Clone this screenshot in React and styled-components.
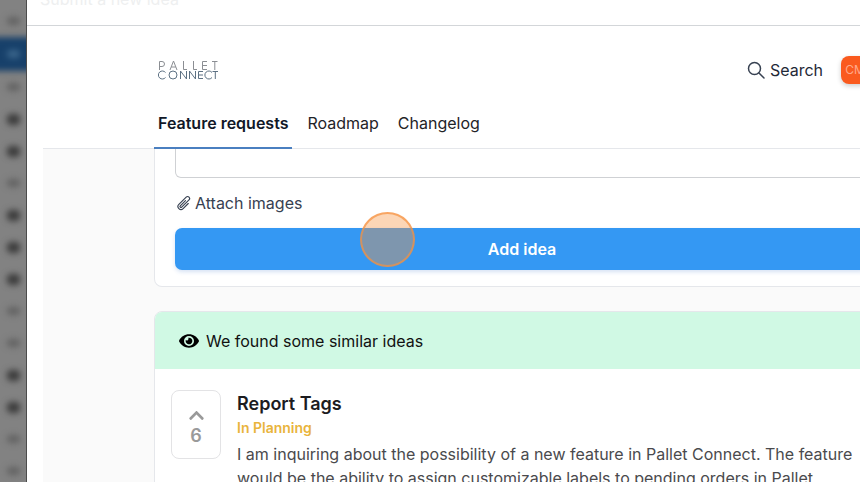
import React from "react";
import styled, { createGlobalStyle } from "styled-components";
import { FaEye, FaChevronUp } from "react-icons/fa";

const GlobalStyle = createGlobalStyle`
  * { box-sizing: border-box; }
  body {
    margin: 0;
    font-family: Inter, "Liberation Sans", sans-serif;
    font-size: 16px;
    line-height: 24px;
    color: #1f2937;
    background: #fff;
  }
  button, textarea, input { font: inherit; color: inherit; }
`;

const Screen = styled.div`
  display: flex;
  height: 100vh;
  overflow: hidden;
`;

const Rail = styled.nav`
  flex: 0 0 27px;
  display: flex;
  flex-direction: column;
  padding-top: 5px;
  overflow: hidden;
  background: #828282;
  border-right: 1px solid #4c4c4c;
`;

const RailItem = styled.div`
  flex: 0 0 ${(p) => (p.$active ? 34 : 32)}px;
  display: flex;
  align-items: center;
  margin: 0 -8px;
  padding-left: 15px;
  background: ${(p) => (p.$active ? "#17406a" : "transparent")};
  filter: blur(3px);
`;

const RailMark = styled.span`
  width: 13px;
  height: ${(p) => (p.$strong ? 11 : 8)}px;
  border-radius: 4px;
  background: ${(p) => (p.$active ? "#3b668c" : p.$strong ? "#3c3c3c" : "#626262")};
`;

const Dialog = styled.section`
  flex: 1;
  min-width: 0;
  display: flex;
  flex-direction: column;
  background: #fff;
`;

const DialogHeader = styled.header`
  flex: 0 0 26px;
  display: flex;
  align-items: flex-end;
  padding: 0 13px 14px;
  overflow: hidden;
  border-bottom: 1px solid #d3d6d9;
  color: #eeeff0;
`;

const Widget = styled.div`
  flex: 1;
  min-height: 0;
  display: flex;
  flex-direction: column;
  margin-left: 16px;
`;

const WidgetHeader = styled.header`
  flex: none;
  padding: 30px 0 0 111px;
  border-bottom: 1px solid #e5e7eb;
`;

const Brand = styled.div`
  display: flex;
  align-items: center;
  justify-content: space-between;
  height: 28px;
  margin-bottom: 27px;
`;

const Logo = styled.svg`
  width: 62px;
  height: 22px;
  margin-left: 4px;
  fill: none;
  stroke-width: 1;
`;

const Actions = styled.div`
  display: flex;
  align-items: center;
  gap: 18px;
  margin-right: -9px;
`;

const SearchButton = styled.button`
  display: flex;
  align-items: center;
  gap: 5px;
  padding: 0;
  border: 0;
  background: none;
  svg { width: 18px; height: 18px; }
`;

const Avatar = styled.button`
  width: 28px;
  height: 28px;
  padding: 0;
  border: 0;
  border-radius: 8px;
  background: #fa5a1e;
  color: #ffa98a;
  font-size: 12px;
  box-shadow: 0 2px 5px rgba(0, 0, 0, 0.2);
`;

const Tabs = styled.nav`
  display: flex;
  gap: 11px;
`;

const Tab = styled.a`
  padding: 0 4px 12px;
  border-bottom: 2px solid ${(p) => (p.$active ? "#4a7fc0" : "transparent")};
  margin-bottom: -1px;
  color: ${(p) => (p.$active ? "#111827" : "#1f2328")};
  font-weight: ${(p) => (p.$active ? 600 : 400)};
  text-decoration: none;
  white-space: nowrap;
`;

const Body = styled.main`
  flex: 1;
  min-height: 0;
  display: flex;
  flex-direction: column;
  gap: 24px;
  padding-left: 111px;
  background: #fafafa;
  overflow: hidden;
`;

const Card = styled.section`
  flex: none;
  margin-right: -30px;
  border: 1px solid #e5e7eb;
  border-radius: 8px;
  background: #fff;
  overflow: hidden;
`;

const FormCard = styled(Card).attrs({ as: "form" })`
  padding: 0 20px 16px;
  border-top: 0;
  border-radius: 0 0 8px 8px;
`;

const Description = styled.textarea`
  display: block;
  width: 100%;
  height: 29px;
  padding: 0 12px;
  border: 1px solid #cfd1d4;
  border-top: 0;
  border-radius: 0 0 6px 6px;
  outline: 0;
  resize: none;
`;

const AttachButton = styled.button`
  display: flex;
  align-items: center;
  gap: 3px;
  margin: 13px 0;
  padding: 0 1px;
  border: 0;
  background: none;
  color: #374151;
  svg { width: 16px; height: 16px; }
`;

const SubmitButton = styled.button`
  display: block;
  width: 100%;
  height: 42px;
  border: 0;
  border-radius: 7px;
  background: #3498f3;
  color: #fff;
  font-weight: 600;
  box-shadow: 0 2px 4px rgba(52, 110, 200, 0.2);
`;

const Notice = styled.h2`
  display: flex;
  align-items: center;
  gap: 7px;
  margin: 0;
  padding: 17px 24px 16px;
  background: #d0f9e4;
  color: #111;
  font-size: 16px;
  font-weight: 400;
  svg { width: 20px; height: 18px; color: #000; }
`;

const Idea = styled.article`
  display: flex;
  align-items: flex-start;
  gap: 16px;
  padding: 21px 16px;
`;

const Vote = styled.button`
  flex: 0 0 50px;
  height: 69px;
  display: flex;
  flex-direction: column;
  align-items: center;
  padding: 16px 0 0;
  border: 1px solid #e3e3e5;
  border-radius: 8px;
  background: #fff;
  color: #9a9a9a;
  font-size: 18px;
  line-height: 24px;
  font-weight: 600;
  svg { width: 17px; height: 17px; }
`;

const IdeaTitle = styled.h3`
  margin: 0;
  color: #1c1c1f;
  font-size: 18px;
  line-height: 28px;
  font-weight: 600;
`;

const Status = styled.p`
  margin: 0;
  color: #e9b43c;
  font-size: 14px;
  line-height: 20px;
  font-weight: 600;
`;

const Summary = styled.p`
  margin: 4px 0 0;
  color: #4a4a4d;
`;

const Pointer = styled.span`
  position: absolute;
  left: 360px;
  top: 212px;
  width: 55px;
  height: 55px;
  border: 2px solid rgba(246, 146, 62, 0.7);
  border-radius: 50%;
  background: rgba(246, 146, 62, 0.38);
  pointer-events: none;
`;

const railItems = ["faint", "active", "faint", "strong", "strong", "faint", "strong", "strong", "strong", "faint", "faint", "strong", "strong", "faint", "faint"];

const BrandLogo = () => (
  <Logo viewBox="0 0 62 22" role="img" aria-label="Pallet Connect">
    <g stroke="#8b8e93">
      <path d="M1.5 11V2.500H4a2.500 2.500 0 0 1 0 5H1.500M12 11l3.500-9 3.500 9M13.200 8h4.600M25.500 2v8.500H29M35.500 2v8.500H39M49 2.500h-4.500v8H49M44.500 6.500H49M54 2.500h5.500M56.800 2.500V11" />
    </g>
    <g stroke="#5d7183">
      <path d="M7.500 13.500a4 4 0 1 0 0 5M22.500 20v-8l6 8v-8M31.500 20v-8l6 8v-8M45 12.500h-4.500v7H45M40.500 16H45M54 13.500a4 4 0 1 0 0 5M54.500 12.500h5.500M57.300 12.500V20" />
      <circle cx="15" cy="16" r="4" />
    </g>
  </Logo>
);

const SearchIcon = () => (
  <svg viewBox="0 0 18 18" fill="none" stroke="#374151" strokeWidth="1.500" strokeLinecap="round">
    <circle cx="7.500" cy="7.500" r="6" />
    <path d="M12 12l5 5" />
  </svg>
);

const PaperclipIcon = () => (
  <svg viewBox="0 0 24 24" fill="none" stroke="currentColor" strokeWidth="1.700" strokeLinecap="round" strokeLinejoin="round">
    <path d="M18.375 12.739l-7.693 7.693a4.500 4.500 0 0 1-6.364-6.364l10.940-10.940A3 3 0 1 1 19.500 7.372L8.552 18.320a1.500 1.500 0 0 1-2.121-2.121l7.810-7.810" />
  </svg>
);

export default function App() {
  return (
    <>
      <GlobalStyle />
      <Screen>
        <Rail aria-label="Main menu">
          {railItems.map((kind, i) => (
            <RailItem key={i} $active={kind === "active"}>
              <RailMark $active={kind === "active"} $strong={kind === "strong"} />
            </RailItem>
          ))}
        </Rail>
        <Dialog>
          <DialogHeader>Submit a new idea</DialogHeader>
          <Widget>
            <WidgetHeader>
              <Brand>
                <BrandLogo />
                <Actions>
                  <SearchButton type="button">
                    <SearchIcon />
                    Search
                  </SearchButton>
                  <Avatar type="button">CM</Avatar>
                </Actions>
              </Brand>
              <Tabs>
                <Tab href="#requests" $active aria-current="page">Feature requests</Tab>
                <Tab href="#roadmap">Roadmap</Tab>
                <Tab href="#changelog">Changelog</Tab>
              </Tabs>
            </WidgetHeader>
            <Body>
              <FormCard>
                <Description aria-label="Description" />
                <AttachButton type="button">
                  <PaperclipIcon />
                  Attach images
                </AttachButton>
                <SubmitButton type="button">Add idea</SubmitButton>
              </FormCard>
              <Card>
                <Notice>
                  <FaEye />
                  We found some similar ideas
                </Notice>
                <Idea>
                  <Vote type="button" aria-label="Upvote, 6 votes">
                    <FaChevronUp />
                    6
                  </Vote>
                  <div>
                    <IdeaTitle>Report Tags</IdeaTitle>
                    <Status>In Planning</Status>
                    <Summary>
                      I am inquiring about the possibility of a new feature in Pallet Connect. The feature
                      would be the ability to assign customizable labels to pending orders in Pallet
                    </Summary>
                  </div>
                </Idea>
              </Card>
            </Body>
          </Widget>
        </Dialog>
      </Screen>
      <Pointer />
    </>
  );
}
